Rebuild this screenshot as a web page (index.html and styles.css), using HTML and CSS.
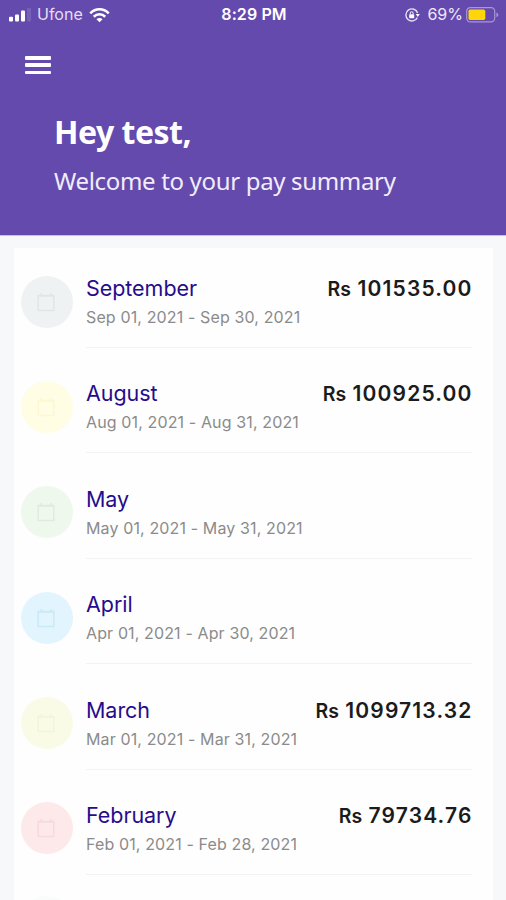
FILE: index.html
```html
<!DOCTYPE html>
<html lang="en">
<head>
<meta charset="utf-8">
<title>Pay summary</title>
<link rel="stylesheet" href="styles.css">
</head>
<body>
<svg width="0" height="0" class="defs" aria-hidden="true">
  <symbol id="calendar" viewBox="0 0 20 22"><path d="M2.2 4.5h15.6v15H2.2zM2.2 5h15.6M5 2v2.5M15 2v2.5" fill="none" stroke="currentColor" stroke-width="1.5" stroke-linejoin="round"/></symbol>
</svg>
<header class="header">
  <div class="status">
    <div class="carrier">
      <svg class="signal" width="23" height="14" viewBox="0 0 23 14" fill="#fff"><rect x="0" y="8.7" width="4" height="4.8" rx="1"/><rect x="6" y="6.4" width="4" height="7.1" rx="1"/><rect x="12" y="2.5" width="4" height="11" rx="1"/><rect x="18" y="0" width="4" height="13.5" rx="1" opacity=".12"/></svg>
      <span class="network">Ufone</span>
      <svg class="wifi" width="21" height="16" viewBox="0 0 22 16" fill="none" stroke="#fff" stroke-width="2.7"><path d="M1.3 6.2C6.8.6 15.2.6 20.7 6.2"/><path d="M5 9.8c3.4-3.4 8.6-3.4 12 0"/><path d="M7.8 12.4c1.9-1.7 4.5-1.7 6.4 0L11 15.6z" fill="#fff" stroke="none"/></svg>
    </div>
    <div class="time">8:29 PM</div>
    <div class="power">
      <svg class="lock" width="15" height="14" viewBox="0 0 15 14" fill="none" stroke="#e5def4"><path d="M12.3 9.6A6 6 0 1 1 12.6 5" stroke-width="1.4"/><path d="M10.8 6h4l-2 3z" fill="#fff" stroke="none"/><rect x="4.2" y="6.3" width="5" height="4" rx=".7" fill="#fff" stroke="none"/><path d="M5.3 6.5V5.2a1.4 1.4 0 0 1 2.8 0v1.3" stroke-width="1.1"/></svg>
      <span class="percent">69%</span>
      <svg class="battery" width="33" height="16" viewBox="0 0 33 16"><rect x=".7" y=".7" width="28" height="14.2" rx="3.6" fill="none" stroke="#a797d2" stroke-width="1.2"/><rect x="2.5" y="2.6" width="16.8" height="10.4" rx="1.7" fill="#ffd60a"/><path d="M30.4 5.6q2 1 2 2.3t-2 2.3z" fill="#a797d2"/></svg>
    </div>
  </div>
  <div class="menu"><i></i><i></i><i></i></div>
  <h1 class="hello">Hey test,</h1>
  <p class="welcome">Welcome to your pay summary</p>
</header>
<main class="card">
  <section class="row"><div class="dot grey"><svg><use href="#calendar"/></svg></div><div class="info"><div><h2>September</h2><p>Sep 01, 2021 - Sep 30, 2021</p></div><div class="pay"><span>Rs</span> 101535.00</div></div></section>
  <section class="row"><div class="dot yellow"><svg><use href="#calendar"/></svg></div><div class="info"><div><h2>August</h2><p>Aug 01, 2021 - Aug 31, 2021</p></div><div class="pay"><span>Rs</span> 100925.00</div></div></section>
  <section class="row"><div class="dot green"><svg><use href="#calendar"/></svg></div><div class="info"><div><h2>May</h2><p>May 01, 2021 - May 31, 2021</p></div></div></section>
  <section class="row"><div class="dot blue"><svg><use href="#calendar"/></svg></div><div class="info"><div><h2>April</h2><p>Apr 01, 2021 - Apr 30, 2021</p></div></div></section>
  <section class="row"><div class="dot lime"><svg><use href="#calendar"/></svg></div><div class="info"><div><h2>March</h2><p>Mar 01, 2021 - Mar 31, 2021</p></div><div class="pay"><span>Rs</span> 1099713.32</div></div></section>
  <section class="row"><div class="dot red"><svg><use href="#calendar"/></svg></div><div class="info"><div><h2>February</h2><p>Feb 01, 2021 - Feb 28, 2021</p></div><div class="pay"><span>Rs</span> 79734.76</div></div></section>
  <section class="row"><div class="dot next"></div></section>
</main>
</body>
</html>
```

FILE: styles.css
```css
* { box-sizing: border-box; }
html, body { height: 100%; }
body {
  margin: 0;
  overflow: hidden;
  background: #f6f8fa;
  font-family: Inter, "Liberation Sans", sans-serif;
  display: flex;
  flex-direction: column;
}
h1, h2, p { margin: 0; }
.defs { display: none; }
.header {
  flex: none;
  height: 236px;
  background: #654aae;
  border-bottom: 1px solid #c9bee7;
  color: #fff;
}
.status {
  height: 29px;
  display: grid;
  grid-template-columns: 1fr auto 1fr;
  align-items: center;
  padding: 0 7px 0 9px;
  font-size: 16px;
  line-height: 29px;
}
.carrier, .power { display: flex; align-items: center; }
.network { margin-left: 5px; color: #e5def4; }
.wifi { margin-left: 6px; }
.time { font-weight: 600; letter-spacing: .1px; }
.power { justify-content: flex-end; }
.percent { margin: 0 3px 0 7px; color: #eee9f8; }
.menu {
  width: 26px;
  height: 18px;
  margin: 27px 0 0 25px;
  display: flex;
  flex-direction: column;
  justify-content: space-between;
}
.menu i { height: 3.5px; border-radius: 1px; background: #fff; }
.hello {
  margin: 35px 0 0 54px;
  font: 700 32px/46px "Noto Sans", sans-serif;
  letter-spacing: -.5px;
  white-space: nowrap;
}
.welcome {
  margin: 7px 0 0 54px;
  font: 400 24px/38px "Noto Sans", sans-serif;
  letter-spacing: -.33px;
  color: #f1edfa;
  white-space: nowrap;
}
.card {
  flex: 1;
  min-height: 0;
  overflow: hidden;
  margin: 12px 13px 0 14px;
  background: #fefefe;
}
.row {
  height: 105.4px;
  padding: 0 21px 0 7px;
  display: flex;
}
.dot {
  flex: none;
  width: 52px;
  height: 52px;
  margin-top: 27.5px;
  border-radius: 50%;
  display: flex;
  align-items: center;
  justify-content: center;
}
.dot svg { width: 20px; height: 22px; margin-left: -2px; }
.grey { background: #eef2f3; color: #e0e6e8; }
.yellow { background: #fffde4; color: #fcf8d4; }
.green { background: #eff8ed; color: #e0ebde; }
.blue { background: #e2f4fd; color: #c9eaf5; }
.lime { background: #f9fbe6; color: #f2f5d9; }
.red { background: #fee9ea; color: #f8dadd; }
.next { margin-top: 16px; background: #fafbfb; }
.info {
  flex: 1;
  margin-left: 13px;
  height: 100px;
  padding-top: 24px;
  border-bottom: 1px solid #f3f3f5;
  display: flex;
  justify-content: space-between;
  white-space: nowrap;
}
.info h2 {
  font-size: 21.5px;
  font-weight: 400;
  line-height: 32px;
  letter-spacing: -.05px;
  color: #260c8c;
}
.info p {
  font-size: 16px;
  line-height: 26px;
  letter-spacing: .13px;
  color: #8b8b8b;
}
.pay {
  padding-top: 1px;
  font-size: 21px;
  font-weight: 600;
  line-height: 32px;
  letter-spacing: 1.15px;
  margin-right: -.5px;
  color: #1b1b1b;
}
.pay span { font-size: 19.5px; letter-spacing: 0; }
```
